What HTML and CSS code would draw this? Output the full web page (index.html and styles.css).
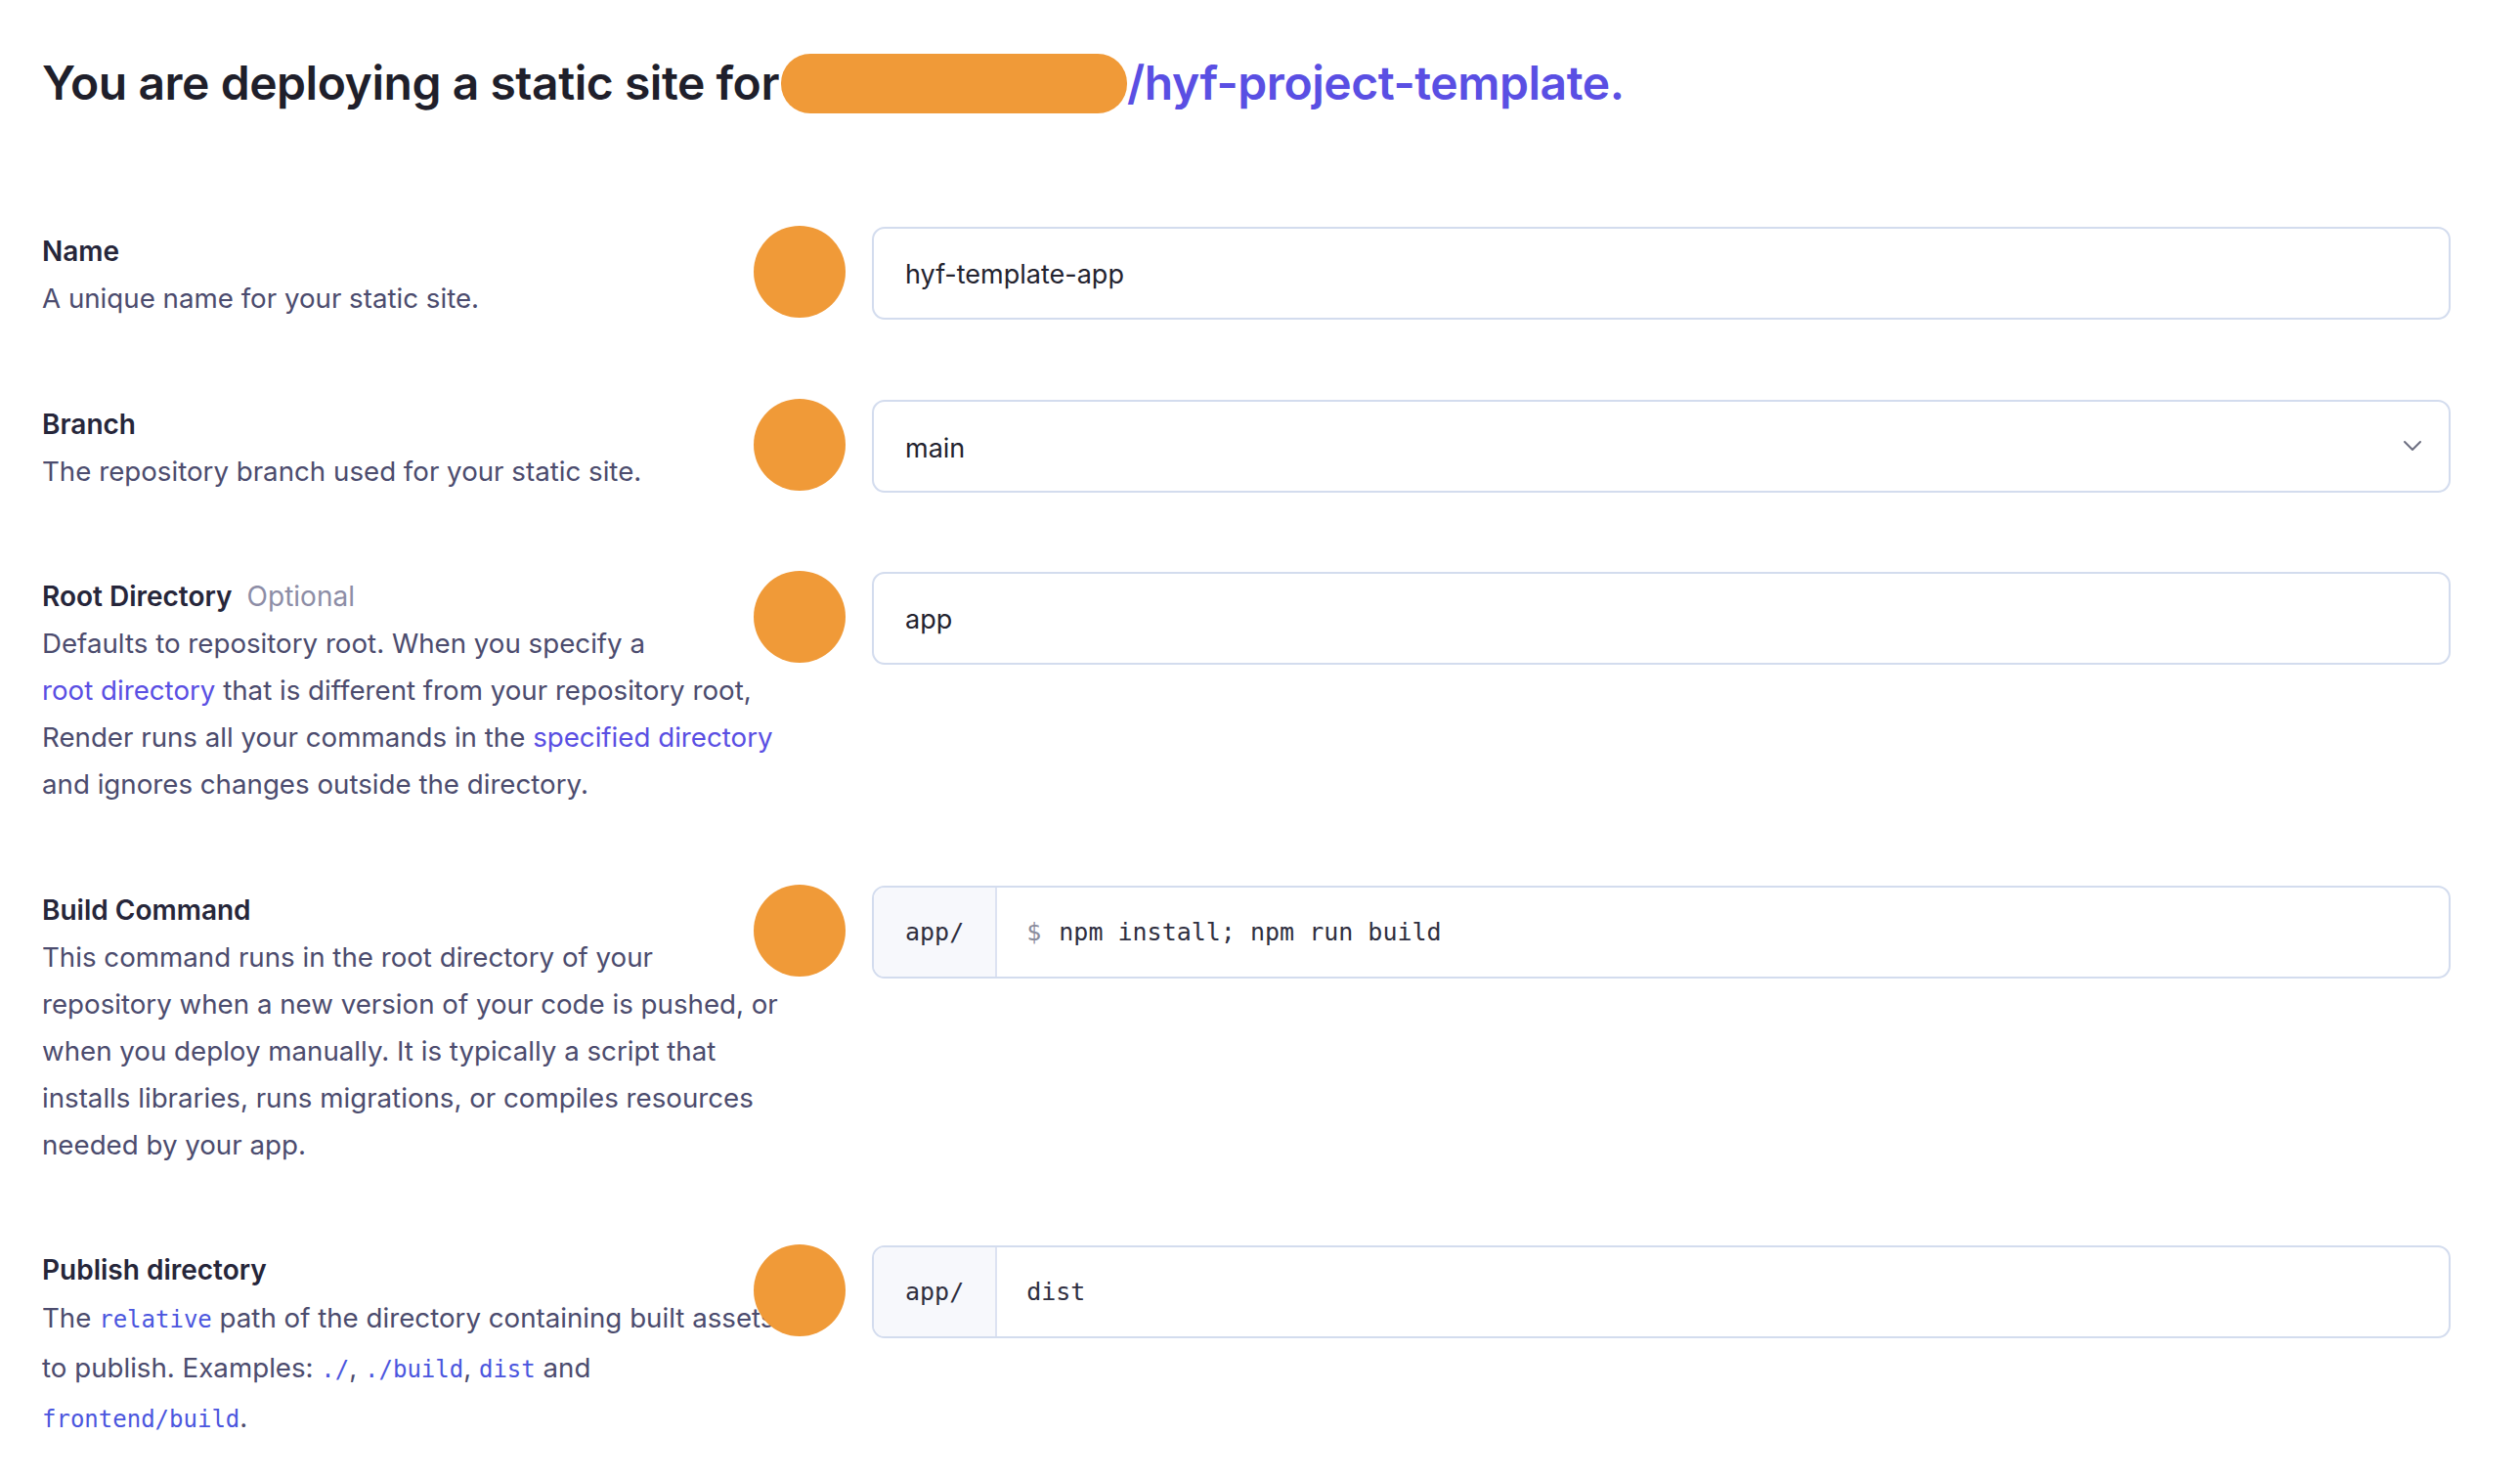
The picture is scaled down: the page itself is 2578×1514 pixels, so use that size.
FILE: index.html
```html
<!DOCTYPE html>
<html lang="en">
<head>
<meta charset="utf-8">
<title>Deploy static site</title>
<link rel="stylesheet" href="styles.css">
</head>
<body>
<main class="page">
  <h1 class="title">You are deploying a static site for<span class="redact-pill"></span><a class="repo" href="#">/hyf-project-template.</a></h1>

  <section class="field">
    <div class="info">
      <div class="label">Name</div>
      <p class="desc">A unique name for your static site.</p>
    </div>
    <span class="redact-dot"></span>
    <div class="control">
      <div class="input"><span class="value text">hyf-template-app</span></div>
    </div>
  </section>

  <section class="field">
    <div class="info">
      <div class="label">Branch</div>
      <p class="desc">The repository branch used for your static site.</p>
    </div>
    <span class="redact-dot"></span>
    <div class="control">
      <div class="input select"><span class="value text">main</span>
        <svg class="chevron" viewBox="0 0 20 12" width="20" height="12"><path d="M2 2 L10 10 L18 2" fill="none" stroke="currentColor" stroke-width="2" stroke-linecap="round" stroke-linejoin="round"/></svg>
      </div>
    </div>
  </section>

  <section class="field">
    <div class="info">
      <div class="label">Root Directory <span class="optional">Optional</span></div>
      <p class="desc">Defaults to repository root. When you specify a <a class="link" href="#">root directory</a> that is different from your repository root, Render runs all your commands in the <a class="link" href="#">specified directory</a> and ignores changes outside the directory.</p>
    </div>
    <span class="redact-dot"></span>
    <div class="control">
      <div class="input"><span class="value text">app</span></div>
    </div>
  </section>

  <section class="field">
    <div class="info">
      <div class="label">Build Command</div>
      <p class="desc">This command runs in the root directory of your repository when a new version of your code is pushed, or when you deploy manually. It is typically a script that installs libraries, runs migrations, or compiles resources needed by your app.</p>
    </div>
    <span class="redact-dot"></span>
    <div class="control">
      <div class="input prefixed">
        <span class="prefix">app/</span>
        <span class="value mono"><span class="dollar">$</span>npm install; npm run build</span>
      </div>
    </div>
  </section>

  <section class="field">
    <div class="info">
      <div class="label">Publish directory</div>
      <p class="desc desc-code">The <code>relative</code> path of the directory containing built assets to publish. Examples: <code>./</code>, <code>./build</code>, <code>dist</code> and <code>frontend/build</code>.</p>
    </div>
    <span class="redact-dot"></span>
    <div class="control">
      <div class="input prefixed">
        <span class="prefix">app/</span>
        <span class="value mono">dist</span>
      </div>
    </div>
  </section>
</main>
</body>
</html>
```
FILE: styles.css
```css
* { box-sizing: border-box; }
html, body { margin: 0; padding: 0; background: #ffffff; }
body {
  font-family: "Inter", "Noto Sans", "Liberation Sans", sans-serif;
  color: #26263a;
}
.page {
  padding: 0 71px 0 43px;
}
.title {
  margin: 0;
  padding-top: 53px;
  height: 232px;
  font-size: 48px;
  line-height: 64px;
  font-weight: 600;
  letter-spacing: -0.45px;
  color: #1f1f2b;
  white-space: nowrap;
}
.redact-pill {
  display: inline-block;
  width: 354px;
  height: 61px;
  margin-left: 2px;
  border-radius: 30px;
  background: #f09a38;
  vertical-align: -14px;
}
.repo {
  color: #5a4fe3;
  text-decoration: none;
}
.field {
  position: relative;
  display: flex;
  align-items: flex-start;
  margin-bottom: 79.5px;
}
.info {
  width: 760px;
  flex: none;
  padding-top: 1px;
}
.label {
  font-size: 28px;
  line-height: 48px;
  font-weight: 600;
  color: #26263a;
}
.optional {
  margin-left: 8px;
  font-weight: 400;
  color: #8d8da6;
}
.desc {
  margin: 0;
  font-size: 27.7px;
  line-height: 48px;
  color: #4c4c6e;
}
.desc-code { line-height: 51px; }
.link {
  color: #5a4fe3;
  text-decoration: none;
  white-space: nowrap;
}
code {
  font-family: "DejaVu Sans Mono", "Liberation Mono", monospace;
  font-size: 24px;
  line-height: 1;
  color: #4b56de;
}
.redact-dot {
  position: absolute;
  left: 728px;
  top: -1px;
  width: 94px;
  height: 94px;
  border-radius: 50%;
  background: #f09a38;
}
.control {
  flex: 1;
  margin-left: 89px;
}
.input {
  display: flex;
  align-items: center;
  height: 95px;
  border: 2px solid #d3dcee;
  border-radius: 13px;
  background: #fff;
  padding: 0 32px;
  font-size: 27px;
  color: #23232f;
}
.text { padding-top: 2px; }
.select { justify-content: space-between; padding-right: 27px; }
.select .value { padding-top: 4px; }
.chevron { color: #6c6e80; }
.prefixed { padding: 0; }
.prefix {
  display: flex;
  align-items: center;
  height: 100%;
  padding: 0 32px;
  background: #f7f8fc;
  border-right: 2px solid #dde3f2;
  border-radius: 11px 0 0 11px;
  font-family: "DejaVu Sans Mono", "Liberation Mono", monospace;
  font-size: 25px;
  color: #2f2f3f;
}
.mono {
  font-family: "DejaVu Sans Mono", "Liberation Mono", monospace;
  font-size: 25px;
  padding-left: 30px;
  color: #2f2f3f;
}
.dollar {
  color: #8a8c9c;
  margin-right: 18px;
}
```
